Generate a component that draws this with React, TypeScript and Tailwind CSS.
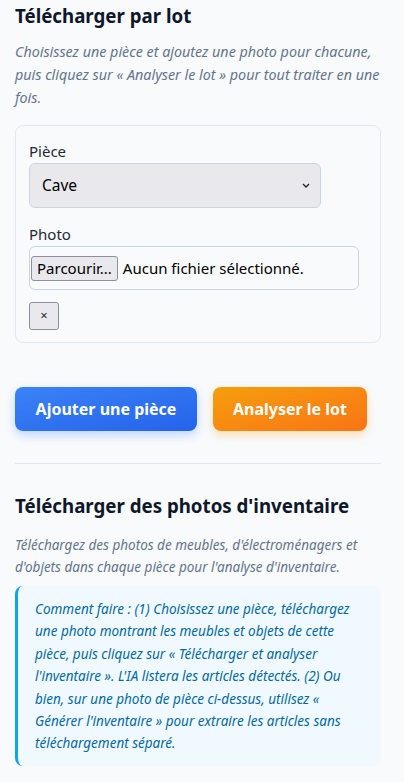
import React from 'react';

const font = { fontFamily: '"Noto Sans", "Open Sans", sans-serif' };

export default function App() {
  return (
    <div className="min-h-[782px] w-[404px] bg-[#f8fafc] px-[15px] pt-[2px] text-[#0f172a]" style={font}>
      <div className="w-[366px]">
        <h2 className="text-[18.7px] font-bold leading-[28px]">Télécharger par lot</h2>
        <p className="mt-[10px] text-[14.3px] italic leading-[23px] text-[#64748b]">
          Choisissez une pièce et ajoutez une photo pour chacune, puis cliquez sur « Analyser le lot » pour tout traiter en une fois.
        </p>

        <div className="mt-[16px] rounded-lg border border-[#e2e8f0] bg-[#f8fafc] px-[13px] pt-[14px] pb-[12px]">
          <label className="block text-[15px] leading-[22px] text-[#1f2937]">Pièce</label>
          <div className="relative mt-[1px] w-[292px]">
            <select
              defaultValue="Cave"
              className="h-[45px] w-full appearance-none rounded-md border border-[#cbd5e1] bg-[#e9e8ed] pl-[12px] text-[15.5px] text-black outline-none"
            >
              <option>Cave</option>
              <option>Salon</option>
              <option>Cuisine</option>
            </select>
            <svg className="pointer-events-none absolute right-[11px] top-[20px]" width="8" height="5" viewBox="0 0 8 5">
              <path d="M1 1l3 3 3-3" fill="none" stroke="#222" strokeWidth="1.3" />
            </svg>
          </div>

          <label className="mt-[15px] block text-[15px] leading-[22px] text-[#1f2937]">Photo</label>
          <div className="mt-[1px] flex h-[44px] w-[330px] items-center rounded-md border border-[#cbd5e1] bg-[#f8fafc] pl-[1px]">
            <span className="rounded-[3px] border border-[#8f8f9d] bg-[#e9e9ed] px-[5px] text-[15px] leading-[23px] text-black">Parcourir...</span>
            <span className="ml-[5px] text-[15px] text-black">Aucun fichier sélectionné.</span>
          </div>

          <button className="mt-[12px] flex h-[28px] w-[30px] items-center justify-center rounded-[3px] border border-[#8f8f9d] bg-[#e9e9ed] text-[13px] text-[#1f2937]">
            ×
          </button>
        </div>

        <div className="mt-[44px] flex gap-[16px]">
          <button className="h-[44px] w-[182px] rounded-lg bg-gradient-to-br from-[#3b82f6] to-[#2563eb] text-[16px] font-bold text-white shadow-[0_4px_10px_rgba(59,130,246,0.3)]">
            Ajouter une pièce
          </button>
          <button className="h-[44px] w-[154px] rounded-lg bg-gradient-to-br from-[#f59e0b] to-[#f97316] text-[16px] font-bold text-white shadow-[0_4px_10px_rgba(245,158,11,0.3)]">
            Analyser le lot
          </button>
        </div>

        <hr className="mt-[32px] border-t border-[#e2e8f0]" />

        <h2 className="mt-[28px] text-[18.7px] font-bold leading-[28px]">Télécharger des photos d'inventaire</h2>
        <p className="mt-[15px] text-[13.5px] italic leading-[21.5px] text-[#64748b]">
          Téléchargez des photos de meubles, d'électroménagers et d'objets dans chaque pièce pour l'analyse d'inventaire.
        </p>

        <div className="mt-[8px] rounded-lg border-l-[3px] border-[#0ea5e9] bg-[#f0f9ff] pl-[17px] pr-[12px] pt-[12px] pb-[11px]">
          <p className="text-[13.5px] italic leading-[22.4px] text-[#0369a1]">
            Comment faire : (1) Choisissez une pièce, téléchargez une photo montrant les meubles et objets de cette pièce, puis cliquez sur « Télécharger et analyser l'inventaire ». L'IA listera les articles détectés. (2) Ou bien, sur une photo de pièce ci-dessus, utilisez « Générer l'inventaire » pour extraire les articles sans téléchargement séparé.
          </p>
        </div>
      </div>
    </div>
  );
}
